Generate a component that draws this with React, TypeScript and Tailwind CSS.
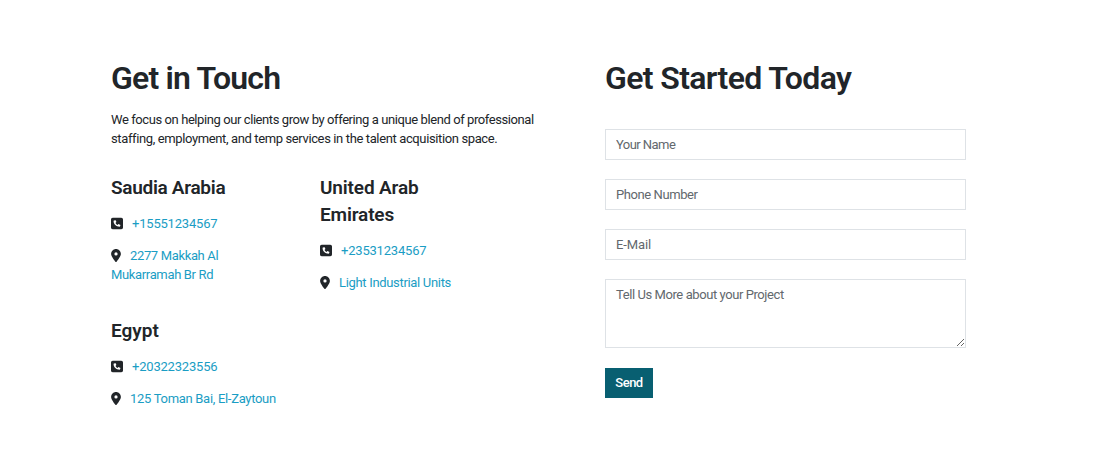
import { FaLocationDot, FaSquarePhone } from "react-icons/fa6";

type OfficeProps = {
  name: string;
  nameClass?: string;
  phone: string;
  address: string;
  addressClass?: string;
};

function Office({ name, nameClass = "", phone, address, addressClass = "" }: OfficeProps) {
  return (
    <section>
      <h2 className={`mb-[13px] text-[19px] leading-[27px] font-semibold whitespace-pre-line ${nameClass}`}>{name}</h2>
      <p className="mb-[13px] leading-[19px]">
        <FaSquarePhone className="mr-[9px] inline-block h-[13px] w-[12px] align-[-2px]" preserveAspectRatio="none" />
        <a href="#" className="tracking-[-0.2px] text-[#1a9dc4]">{phone}</a>
      </p>
      <p className="leading-[19px] whitespace-pre-line">
        <FaLocationDot className="mr-[9px] inline-block h-[13px] w-[10px] align-[-2px]" />
        <a href="#" className={`text-[#1a9dc4] ${addressClass}`}>{address}</a>
      </p>
    </section>
  );
}

const field =
  "block w-full rounded-none border border-[#dee2e6] bg-white px-[10px] text-[13px] text-[#212529] outline-none placeholder:text-[#62686d]";

export default function App() {
  return (
    <main className="flex h-[469px] bg-white pl-[111px] font-['Roboto',sans-serif] text-[13px] text-[#212529]">
      <div className="w-[494px] pt-[58px]">
        <h1 className="text-[32px] leading-[40px] font-semibold tracking-[-0.8px]">Get in Touch</h1>
        <p className="mt-[12px] leading-[19px] whitespace-nowrap">
          <span className="tracking-[-0.415px]">We focus on helping our clients grow by offering a unique blend of professional</span>
          <br />
          <span className="tracking-[-0.375px]">staffing, employment, and temp services in the talent acquisition space.</span>
        </p>
        <div className="mt-[26px] grid grid-cols-[209px_209px] gap-y-[25px]">
          <Office
            name="Saudia Arabia"
            nameClass="tracking-[-0.3px]"
            phone="+15551234567"
            address={"2277 Makkah Al\nMukarramah Br Rd"}
            addressClass="tracking-[-0.35px]"
          />
          <Office
            name={"United Arab\nEmirates"}
            nameClass="tracking-[-0.15px]"
            phone="+23531234567"
            address="Light Industrial Units"
            addressClass="tracking-[-0.32px]"
          />
          <Office
            name="Egypt"
            phone="+20322323556"
            address="125 Toman Bai, El-Zaytoun"
            addressClass="tracking-[-0.3px]"
          />
        </div>
      </div>
      <div className="w-[361px] pt-[58px]">
        <h1 className="text-[32px] leading-[40px] font-semibold tracking-[-0.62px] whitespace-nowrap">Get Started Today</h1>
        <form className="mt-[31px] flex flex-col items-start" onSubmit={(e) => e.preventDefault()}>
          <input className={`${field} mb-[19px] h-[31px] tracking-[-0.55px]`} placeholder="Your Name" />
          <input className={`${field} mb-[19px] h-[31px] tracking-[-0.42px]`} placeholder="Phone Number" />
          <input className={`${field} mb-[19px] h-[31px] tracking-[-0.1px]`} placeholder="E-Mail" />
          <textarea
            className={`${field} mb-[20px] h-[69px] resize-y py-[5px] leading-[19px] tracking-[-0.42px]`}
            placeholder="Tell Us More about your Project"
          />
          <button className="h-[30px] w-[48px] bg-[#085f71] text-[13px] font-medium tracking-[-0.5px] text-white">Send</button>
        </form>
      </div>
    </main>
  );
}
